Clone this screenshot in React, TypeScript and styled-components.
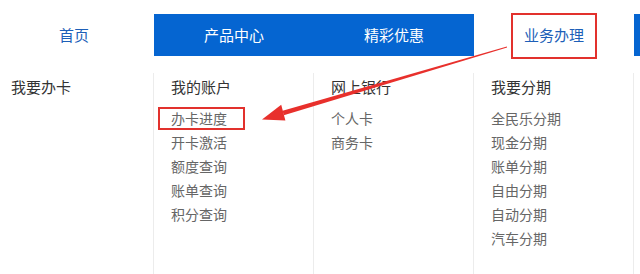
import React from "react";
import styled, { createGlobalStyle } from "styled-components";

const Global = createGlobalStyle`
  html, body { margin: 0; padding: 0; background: #fff; }
  body { font-family: "Noto Sans CJK SC", "Noto Sans", sans-serif; }
`;

const Page = styled.div`
  position: relative;
  width: 640px;
  height: 274px;
  overflow: hidden;
  background: #fff;
`;

const Nav = styled.nav`
  display: flex;
  margin-top: 14px;
  margin-left: -6px;
  height: 42px;
`;

const Tab = styled.div<{ $blue?: boolean }>`
  flex: 0 0 160px;
  box-sizing: border-box;
  display: flex;
  align-items: center;
  justify-content: center;
  height: 42px;
  padding-bottom: 2px;
  font-size: 15px;
  background: ${(p) => (p.$blue ? "#0565d1" : "#fff")};
  color: ${(p) => (p.$blue ? "#fff" : "#1d5fb8")};
`;

const Highlight = styled.span`
  display: inline-flex;
  align-items: center;
  box-sizing: border-box;
  height: 46px;
  margin-top: 3px;
  padding: 0 11px 2px;
  border: 2px solid #e2312d;
`;

const Panel = styled.div`
  display: grid;
  grid-template-columns: 153px 160px 160px 161px;
  margin-top: 17px;
  height: 201px;
`;

const Column = styled.div<{ $first?: boolean; $last?: boolean }>`
  box-sizing: border-box;
  padding: 2px 0 0 ${(p) => (p.$first ? "11px" : "17px")};
  border-left: ${(p) => (p.$first ? "none" : "1px solid #ececec")};
  border-right: ${(p) => (p.$last ? "1px solid #ececec" : "none")};
`;

const Heading = styled.div`
  font-size: 15px;
  line-height: 24px;
  color: #333;
  margin-bottom: 7px;
`;

const Item = styled.div`
  position: relative;
  font-size: 14px;
  line-height: 24px;
  color: #666;
`;

const ItemMark = styled.span`
  position: absolute;
  left: -13px;
  top: 1px;
  width: 87px;
  height: 23px;
  box-sizing: border-box;
  border: 2px solid #e2312d;
`;

const ArrowLayer = styled.svg`
  position: absolute;
  left: 0;
  top: 0;
  pointer-events: none;
`;

const columns = [
  { title: "我要办卡", items: [] as string[] },
  { title: "我的账户", items: ["办卡进度", "开卡激活", "额度查询", "账单查询", "积分查询"] },
  { title: "网上银行", items: ["个人卡", "商务卡"] },
  { title: "我要分期", items: ["全民乐分期", "现金分期", "账单分期", "自由分期", "自动分期", "汽车分期"] },
];

export default function App() {
  return (
    <Page>
      <Global />
      <Nav>
        <Tab>首页</Tab>
        <Tab $blue>产品中心</Tab>
        <Tab $blue>精彩优惠</Tab>
        <Tab>
          <Highlight>业务办理</Highlight>
        </Tab>
        <Tab $blue />
      </Nav>
      <Panel>
        {columns.map((c, i) => (
          <Column key={c.title} $first={i === 0} $last={i === columns.length - 1}>
            <Heading>{c.title}</Heading>
            {c.items.map((it) => (
              <Item key={it}>
                {it}
                {it === "办卡进度" && <ItemMark />}
              </Item>
            ))}
          </Column>
        ))}
      </Panel>
      <ArrowLayer width="640" height="274" viewBox="0 0 640 274">
        <polygon
          points="507.1,47.4 506.9,46.6 282.6,110.8 283.8,115.2"
          fill="#e8302c"
        />
        <polygon points="262,119.5 281.2,104.8 285.4,120.6" fill="#e8302c" />
      </ArrowLayer>
    </Page>
  );
}
